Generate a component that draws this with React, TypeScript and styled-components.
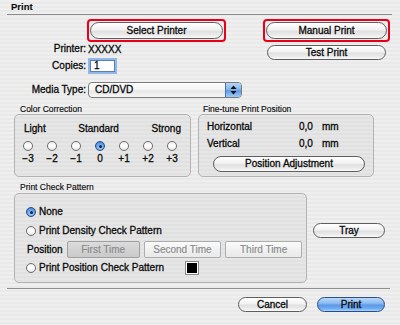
import React from "react";
import styled, { createGlobalStyle, css } from "styled-components";

const GlobalStyle = createGlobalStyle`
  html, body {
    margin: 0;
    padding: 0;
  }
  body {
    width: 400px;
    height: 325px;
    overflow: hidden;
    font-family: "Liberation Sans", Arial, sans-serif;
  }
  * {
    box-sizing: border-box;
  }
`;

const stripes = (a: string, b: string) =>
  `repeating-linear-gradient(to bottom, ${a} 0px, ${a} 2px, ${b} 2px, ${b} 4px)`;

const Window = styled.div`
  width: 400px;
  height: 325px;
  background: ${stripes("#efefef", "#e9e9e9")};
  font-size: 10px;
  color: #0a0a0a;
  display: flex;
  flex-direction: column;
  -webkit-text-stroke: 0.3px #0a0a0a;
`;

const TitleBar = styled.div`
  margin: 0 8px 0 7px;
  height: 15px;
  border-bottom: 1px solid #8c8c8c;
  padding-left: 4px;
  font-weight: bold;
  font-size: 9.5px;
  line-height: 14px;
  -webkit-text-stroke: 0.1px #0a0a0a;
`;

const TopSection = styled.div`
  display: flex;
`;

const LeftCol = styled.div`
  width: 243px;
  display: flex;
  flex-direction: column;
`;

const RightCol = styled.div`
  margin-left: 20px;
  display: flex;
  flex-direction: column;
`;

const FormRow = styled.div<{ $h: number; $mt: number; $pl?: number }>`
  display: flex;
  align-items: center;
  height: ${(p) => p.$h}px;
  margin-top: ${(p) => p.$mt}px;
  padding-left: ${(p) => p.$pl ?? 0}px;
`;

const FieldLabel = styled.span`
  width: 88px;
  padding-right: 2px;
  text-align: right;
  line-height: 12px;
`;

const Highlight = styled.div<{ $w: number; $ml?: number }>`
  width: ${(p) => p.$w}px;
  height: 23px;
  margin-left: ${(p) => p.$ml ?? 0}px;
  border: 2px solid #e8001a;
  border-radius: 4px;
  padding: 1px;
  display: flex;
`;

const AquaButton = styled.div<{ $w?: number; $h?: number; $primary?: boolean }>`
  ${(p) => (p.$w ? `width: ${p.$w}px;` : "flex: 1;")}
  height: ${(p) => p.$h ?? 17}px;
  border: 1px solid #5e5e5e;
  border-radius: 9px;
  background: linear-gradient(
    to bottom,
    #ffffff 0%,
    #f2f2f2 45%,
    #e0e0e0 55%,
    #ebebeb 80%,
    #fafafa 100%
  );
  display: flex;
  align-items: center;
  justify-content: center;
  line-height: 12px;
  ${(p) =>
    p.$primary &&
    css`
      border-color: #2c4c86;
      background: linear-gradient(
        to bottom,
        #b9d8f8 0%,
        #8cbcf2 40%,
        #5b99e8 55%,
        #6eaaf0 80%,
        #a8d4fc 100%
      );
    `}
`;

const Field = styled.div`
  width: 29px;
  height: 16px;
  background: #fff;
  border: 2px solid #93b8e8;
  box-shadow: inset 0 0 0 1px #5a7fb6;
  padding-left: 4px;
  line-height: 12px;
`;

const Popup = styled.div`
  width: 154px;
  height: 16px;
  border: 1px solid #7a7a7a;
  border-radius: 4px;
  display: flex;
  overflow: hidden;
  background: linear-gradient(to bottom, #ffffff 0%, #f3f3f3 50%, #e6e6e6 55%, #f7f7f7 100%);
`;

const PopupText = styled.span`
  flex: 1;
  padding-left: 6px;
  line-height: 14px;
`;

const PopupArrows = styled.span`
  width: 16px;
  border-left: 1px solid #4a72ad;
  background: linear-gradient(to bottom, #b8d6f6 0%, #86b7ef 45%, #5e9ae6 55%, #9fcaf7 100%);
  display: flex;
  align-items: center;
  justify-content: center;
`;

const GroupsRow = styled.div`
  display: flex;
  gap: 7px;
  margin-top: 6px;
  padding-left: 14px;
`;

const Group = styled.div<{ $w: number }>`
  width: ${(p) => p.$w}px;
  display: flex;
  flex-direction: column;
`;

const GroupLabel = styled.div<{ $pl: number }>`
  font-size: 8.5px;
  line-height: 10px;
  padding-left: ${(p) => p.$pl}px;
  -webkit-text-stroke: 0.15px #111;
`;

const GroupBox = styled.div<{ $h: number; $mt?: number }>`
  height: ${(p) => p.$h}px;
  margin-top: ${(p) => p.$mt ?? 0}px;
  border: 1px solid #b3b3b3;
  border-radius: 5px;
  background: ${stripes("#e6e6e6", "#e1e1e1")};
  display: flex;
  flex-direction: column;
`;

const ScaleLabels = styled.div`
  display: flex;
  justify-content: space-between;
  padding: 0 9px;
  margin-top: 8px;
  line-height: 12px;
`;

const ScaleGrid = styled.div<{ $mt: number }>`
  display: grid;
  grid-template-columns: repeat(7, 24px);
  justify-items: center;
  align-items: center;
  margin-left: 1px;
  margin-top: ${(p) => p.$mt}px;
  line-height: 12px;
`;

const RadioDot = styled.span<{ $on?: boolean }>`
  position: relative;
  display: inline-block;
  width: 10px;
  height: 10px;
  border-radius: 50%;
  border: 1px solid #6a6a6a;
  background: linear-gradient(to bottom, #f0f0f0 0%, #ffffff 50%, #e6e6e6 100%);
  flex-shrink: 0;
  ${(p) =>
    p.$on &&
    css`
      border-color: #284b82;
      background: radial-gradient(circle at 50% 70%, #a9d2fb 0%, #5d9ae8 60%, #3a78d4 100%);
      &::after {
        content: "";
        position: absolute;
        left: 2.5px;
        top: 2.5px;
        width: 3px;
        height: 3px;
        border-radius: 50%;
        background: #0c2448;
      }
    `}
`;

const PosGrid = styled.div<{ $mt: number }>`
  display: grid;
  grid-template-columns: 92px 23px auto;
  padding-left: 8px;
  margin-top: ${(p) => p.$mt}px;
  line-height: 12px;
`;

const PatternSection = styled.div`
  display: flex;
  margin-top: 5px;
  padding-left: 14px;
`;

const OptionRow = styled.div<{ $mt: number }>`
  display: flex;
  align-items: center;
  gap: 3px;
  height: 14px;
  margin-top: ${(p) => p.$mt}px;
  padding-left: 11px;
`;

const OptionText = styled.span<{ $w?: number }>`
  line-height: 12px;
  ${(p) => p.$w && `width: ${p.$w}px;`}
`;

const PositionRow = styled.div`
  display: flex;
  align-items: center;
  height: 17px;
  margin-top: 3px;
  padding-left: 12px;
`;

const PositionLabel = styled.span`
  width: 40px;
  line-height: 12px;
`;

const BevelButton = styled.div<{ $w: number; $pressed?: boolean }>`
  width: ${(p) => p.$w}px;
  height: 17px;
  margin-right: 4px;
  border: 1px solid #adadad;
  border-radius: 2px;
  background: linear-gradient(to bottom, #fbfbfb 0%, #f1f1f1 50%, #e9e9e9 100%);
  color: #8a8a8a;
  -webkit-text-stroke: 0.15px #8a8a8a;
  display: flex;
  align-items: center;
  justify-content: center;
  line-height: 12px;
  ${(p) =>
    p.$pressed &&
    css`
      border-color: #a0a0a0;
      background: linear-gradient(to bottom, #dcdcdc 0%, #d2d2d2 50%, #cacaca 100%);
    `}
`;

const ColorWell = styled.span`
  width: 14px;
  height: 14px;
  border: 1px solid #8a8a8a;
  padding: 1px;
  background: #fff;
  display: flex;
  &::before {
    content: "";
    flex: 1;
    background: #000;
  }
`;

const TraySlot = styled.div`
  margin-left: 6px;
  margin-top: 41px;
`;

const Separator = styled.div`
  margin: 5px 10px 0 7px;
  border-top: 1px solid #8f8f8f;
`;

const Footer = styled.div`
  display: flex;
  justify-content: flex-end;
  gap: 10px;
  padding-right: 15px;
  margin-top: 8px;
`;

const scale = ["−3", "−2", "−1", "0", "+1", "+2", "+3"];

export default function App() {
  return (
    <>
      <GlobalStyle />
      <Window>
        <TitleBar>Print</TitleBar>
        <TopSection>
          <LeftCol>
            <FormRow $h={23} $mt={4}>
              <Highlight $w={139} $ml={87}>
                <AquaButton>Select Printer</AquaButton>
              </Highlight>
            </FormRow>
            <FormRow $h={12} $mt={1}>
              <FieldLabel>Printer:</FieldLabel>
              <span>XXXXX</span>
            </FormRow>
            <FormRow $h={17} $mt={2}>
              <FieldLabel>Copies:</FieldLabel>
              <Field>1</Field>
            </FormRow>
            <FormRow $h={17} $mt={7}>
              <FieldLabel>Media Type:</FieldLabel>
              <Popup>
                <PopupText>CD/DVD</PopupText>
                <PopupArrows>
                  <svg width="7" height="10" viewBox="0 0 7 10">
                    <path d="M3.5 0.5 L6.5 4 L0.5 4 Z" fill="#111" />
                    <path d="M3.5 9.5 L6.5 6 L0.5 6 Z" fill="#111" />
                  </svg>
                </PopupArrows>
              </Popup>
            </FormRow>
          </LeftCol>
          <RightCol>
            <FormRow $h={23} $mt={4}>
              <Highlight $w={127}>
                <AquaButton>Manual Print</AquaButton>
              </Highlight>
            </FormRow>
            <FormRow $h={15} $mt={3} $pl={4}>
              <AquaButton $w={119} $h={15}>
                Test Print
              </AquaButton>
            </FormRow>
          </RightCol>
        </TopSection>

        <GroupsRow>
          <Group $w={177}>
            <GroupLabel $pl={6}>Color Correction</GroupLabel>
            <GroupBox $h={63}>
              <ScaleLabels>
                <span>Light</span>
                <span>Standard</span>
                <span>Strong</span>
              </ScaleLabels>
              <ScaleGrid $mt={6}>
                {scale.map((s) => (
                  <RadioDot key={s} $on={s === "0"} />
                ))}
              </ScaleGrid>
              <ScaleGrid $mt={2}>
                {scale.map((s) => (
                  <span key={s}>{s}</span>
                ))}
              </ScaleGrid>
            </GroupBox>
          </Group>
          <Group $w={176}>
            <GroupLabel $pl={5}>Fine-tune Print Position</GroupLabel>
            <GroupBox $h={63}>
              <PosGrid $mt={6}>
                <span>Horizontal</span>
                <span>0,0</span>
                <span>mm</span>
              </PosGrid>
              <PosGrid $mt={5}>
                <span>Vertical</span>
                <span>0,0</span>
                <span>mm</span>
              </PosGrid>
              <FormRow $h={16} $mt={6} $pl={14}>
                <AquaButton $w={152} $h={16}>
                  Position Adjustment
                </AquaButton>
              </FormRow>
            </GroupBox>
          </Group>
        </GroupsRow>

        <PatternSection>
          <Group $w={293}>
            <GroupLabel $pl={6}>Print Check Pattern</GroupLabel>
            <GroupBox $h={90} $mt={1}>
              <OptionRow $mt={11}>
                <RadioDot $on />
                <OptionText>None</OptionText>
              </OptionRow>
              <OptionRow $mt={5}>
                <RadioDot />
                <OptionText>Print Density Check Pattern</OptionText>
              </OptionRow>
              <PositionRow>
                <PositionLabel>Position</PositionLabel>
                <BevelButton $w={73} $pressed>
                  First Time
                </BevelButton>
                <BevelButton $w={78}>Second Time</BevelButton>
                <BevelButton $w={77}>Third Time</BevelButton>
              </PositionRow>
              <OptionRow $mt={3}>
                <RadioDot />
                <OptionText $w={143}>Print Position Check Pattern</OptionText>
                <ColorWell />
              </OptionRow>
            </GroupBox>
          </Group>
          <TraySlot>
            <AquaButton $w={72} $h={15}>
              Tray
            </AquaButton>
          </TraySlot>
        </PatternSection>

        <Separator />
        <Footer>
          <AquaButton $w={69} $h={15}>
            Cancel
          </AquaButton>
          <AquaButton $w={68} $h={15} $primary>
            Print
          </AquaButton>
        </Footer>
      </Window>
    </>
  );
}
